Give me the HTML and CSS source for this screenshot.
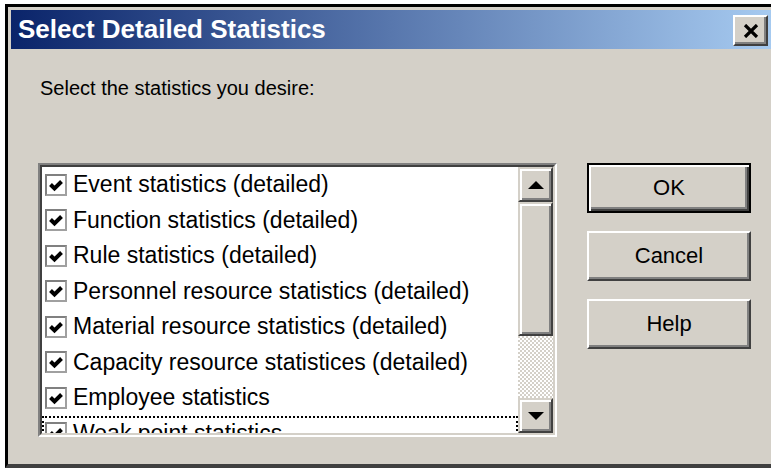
FILE: index.html
```html
<!DOCTYPE html>
<html lang="en">
<head>
<meta charset="utf-8">
<title>Select Detailed Statistics</title>
<link rel="stylesheet" href="styles.css">
</head>
<body>
<div class="window">
  <div class="titlebar">
    <span class="title">Select Detailed Statistics</span>
    <button class="close" type="button" aria-label="Close">
      <svg width="16" height="14" viewBox="0 0 16 14" aria-hidden="true">
        <path d="M2 1 L14 13 M14 1 L2 13" stroke="#000" stroke-width="3.2" fill="none"/>
      </svg>
    </button>
  </div>
  <div class="body">
    <p class="prompt">Select the statistics you desire:</p>
    <div class="main">
      <div class="listbox">
        <div class="listinner">
          <ul class="items">
            <li><span class="check"><svg viewBox="0 0 18 18"><polyline points="3.5,8.5 7.5,12.5 14.5,5.5"/></svg></span><span>Event statistics (detailed)</span></li>
            <li><span class="check"><svg viewBox="0 0 18 18"><polyline points="3.5,8.5 7.5,12.5 14.5,5.5"/></svg></span><span>Function statistics (detailed)</span></li>
            <li><span class="check"><svg viewBox="0 0 18 18"><polyline points="3.5,8.5 7.5,12.5 14.5,5.5"/></svg></span><span>Rule statistics (detailed)</span></li>
            <li><span class="check"><svg viewBox="0 0 18 18"><polyline points="3.5,8.5 7.5,12.5 14.5,5.5"/></svg></span><span>Personnel resource statistics (detailed)</span></li>
            <li><span class="check"><svg viewBox="0 0 18 18"><polyline points="3.5,8.5 7.5,12.5 14.5,5.5"/></svg></span><span>Material resource statistics (detailed)</span></li>
            <li><span class="check"><svg viewBox="0 0 18 18"><polyline points="3.5,8.5 7.5,12.5 14.5,5.5"/></svg></span><span>Capacity resource statistices (detailed)</span></li>
            <li><span class="check"><svg viewBox="0 0 18 18"><polyline points="3.5,8.5 7.5,12.5 14.5,5.5"/></svg></span><span>Employee statistics</span></li>
            <li class="focused"><span class="check"><svg viewBox="0 0 18 18"><polyline points="3.5,8.5 7.5,12.5 14.5,5.5"/></svg></span><span>Weak point statistics</span></li>
          </ul>
          <div class="scrollbar">
            <div class="sb-btn"><span class="arrow-up"></span></div>
            <div class="thumb"></div>
            <div class="track"></div>
            <div class="sb-btn"><span class="arrow-down"></span></div>
          </div>
        </div>
      </div>
      <div class="buttons">
        <button class="btn default" type="button">OK</button>
        <button class="btn" type="button">Cancel</button>
        <button class="btn" type="button">Help</button>
      </div>
    </div>
  </div>
</div>
</body>
</html>
```
FILE: styles.css
```css
html, body {
  margin: 0;
  padding: 0;
  background: #fff;
}

.window {
  box-sizing: border-box;
  width: 766px;
  height: 464px;
  margin: 4px 0 0 5px;
  padding: 3px 0 0 3px;
  background: #d4d0c8;
  border-top: 3px solid #000;
  border-left: 3px solid #000;
  border-bottom: 4px solid #404040;
  display: flex;
  flex-direction: column;
  font-family: "Liberation Sans", Arial, sans-serif;
  color: #000;
}

/* caption bar */
.titlebar {
  height: 39px;
  flex: none;
  display: flex;
  align-items: center;
  justify-content: space-between;
  padding: 0 3px 0 7px;
  background: linear-gradient(to right, #0a246a, #a6caf0);
}

.title {
  color: #fff;
  font-weight: bold;
  font-size: 26px;
}

.close {
  box-sizing: border-box;
  width: 35px;
  height: 31px;
  padding: 0;
  margin-top: 2px;
  background: #d4d0c8;
  border: 2px solid;
  border-color: #fff #404040 #404040 #fff;
  box-shadow: inset -2px -2px #808080;
  display: flex;
  align-items: center;
  justify-content: center;
}

/* dialog content */
.body {
  padding-left: 27px;
}

.prompt {
  margin: 27px 0 0 2px;
  font-size: 20px;
  line-height: 24px;
}

.main {
  margin-top: 63px;
  display: flex;
  align-items: flex-start;
  gap: 30px;
}

/* checklist box */
.listbox {
  box-sizing: border-box;
  width: 519px;
  height: 274px;
  border: 2px solid;
  border-color: #808080 #fff #fff #808080;
}

.listinner {
  box-sizing: border-box;
  height: 100%;
  border: 2px solid;
  border-color: #404040 #d4d0c8 #d4d0c8 #404040;
  background: #fff;
  display: flex;
}

.items {
  flex: 1;
  margin: 0;
  padding: 0;
  list-style: none;
  overflow: hidden;
}

.items li {
  box-sizing: border-box;
  height: 35.5px;
  display: flex;
  align-items: center;
  gap: 6px;
  padding-left: 3px;
  font-size: 23px;
  white-space: nowrap;
}

.items li.focused {
  border: 2px dotted #000;
  padding-left: 1px;
}

.check {
  box-sizing: border-box;
  width: 22px;
  height: 22px;
  flex: none;
  border: 2px solid;
  border-color: #808080 #a0a0a0 #a0a0a0 #808080;
  background: #fff;
  display: flex;
}

.check svg {
  width: 18px;
  height: 18px;
}

.check polyline {
  fill: none;
  stroke: #000;
  stroke-width: 4;
  stroke-linejoin: miter;
}

/* vertical scrollbar */
.scrollbar {
  width: 35px;
  flex: none;
  display: flex;
  flex-direction: column;
}

.sb-btn,
.thumb {
  box-sizing: border-box;
  background: #d4d0c8;
  border: 2px solid;
  border-color: #d4d0c8 #404040 #404040 #d4d0c8;
  box-shadow: inset 2px 2px #fff, inset -2px -2px #808080;
}

.sb-btn {
  height: 35px;
  flex: none;
  display: flex;
  align-items: center;
  justify-content: center;
}

.thumb {
  height: 134px;
  flex: none;
}

.track {
  flex: 1;
  background: repeating-conic-gradient(#fff 0 25%, #d4d0c8 0 50%) 0 0 / 4px 4px;
}

.arrow-up {
  width: 0;
  height: 0;
  border-left: 8px solid transparent;
  border-right: 8px solid transparent;
  border-bottom: 8px solid #000;
}

.arrow-down {
  width: 0;
  height: 0;
  border-left: 8px solid transparent;
  border-right: 8px solid transparent;
  border-top: 8px solid #000;
}

/* push buttons */
.buttons {
  display: flex;
  flex-direction: column;
  gap: 18px;
}

.btn {
  box-sizing: border-box;
  width: 164px;
  height: 50px;
  padding: 0;
  background: #d4d0c8;
  border: 2px solid;
  border-color: #fff #404040 #404040 #fff;
  box-shadow: inset -2px -2px #808080;
  font-family: "Liberation Sans", Arial, sans-serif;
  font-size: 22px;
  color: #000;
}

.btn.default {
  border: 2px solid #000;
  box-shadow: inset 2px 2px #fff, inset -2px -2px #404040, inset -4px -4px #808080;
}
```
